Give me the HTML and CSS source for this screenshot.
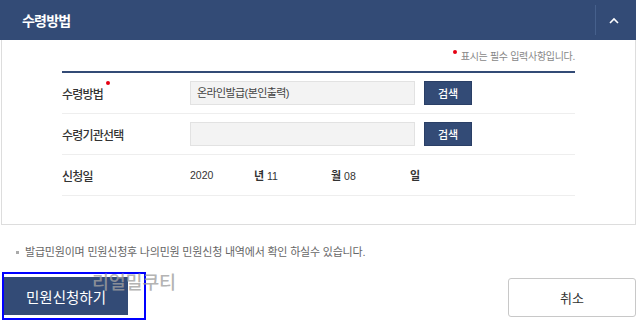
FILE: index.html
```html
<!DOCTYPE html>
<html lang="ko">
<head>
  <meta charset="UTF-8">
  <title>수령방법</title>
  <link rel="stylesheet" href="styles.css">
</head>
<body>

  <div class="wrap">
    <div class="panel-head">
      <h2>수령방법</h2>
      <div class="toggle">
        <svg width="10" height="7" viewBox="0 0 10 7"><path d="M1 6 L5 2 L9 6" fill="none" stroke="#fff" stroke-width="1.6"/></svg>
      </div>
    </div>

    <div class="panel-body">
      <p class="req-note"><span class="dot"></span>표시는 필수 입력사항입니다.</p>

      <div class="form-table">
        <div class="row">
          <div class="label">수령방법<span class="dot"></span></div>
          <div class="field">
            <div class="input">온라인발급(본인출력)</div>
            <button class="btn-search">검색</button>
          </div>
        </div>
        <div class="row">
          <div class="label">수령기관선택</div>
          <div class="field">
            <div class="input"></div>
            <button class="btn-search">검색</button>
          </div>
        </div>
        <div class="row">
          <div class="label">신청일</div>
          <div class="field date">
            <span class="d-year">2020</span>
            <span class="d-month"><b>년</b> 11</span>
            <span class="d-day"><b>월</b> 08</span>
            <span><b>일</b></span>
          </div>
        </div>
      </div>
    </div>

    <p class="info"><span class="bullet"></span>발급민원이며 민원신청후 나의민원 민원신청 내역에서 확인 하실수 있습니다.</p>

    <div class="actions">
      <div class="submit-wrap">
        <button class="btn-submit">민원신청하기</button>
      </div>
      <button class="btn-cancel">취소</button>
      <span class="watermark">리얼밀쿠티</span>
    </div>
  </div>

</body>
</html>
```

FILE: styles.css
```css
body {
  font-family: 'Liberation Sans', 'Noto Sans CJK KR', sans-serif;
  background-color: #fff;
  margin: 0;
  padding: 0;
  color: #333;
}

.wrap {
  width: 635px;
  margin-left: 1px;
  position: relative;
}

.panel-head {
  height: 40px;
  margin-left: -1px;
  background-color: #334b76;
  display: flex;
  align-items: center;
  justify-content: space-between;
  padding-left: 22px;
}

.panel-head h2 {
  margin: 0;
  color: #fff;
  font-size: 14px;
  font-weight: bold;
  letter-spacing: -0.8px;
}

.toggle {
  width: 40px;
  height: 30px;
  border-left: 1px solid #46608c;
  display: flex;
  align-items: center;
  justify-content: center;
}

.toggle svg {
  margin-left: -5px;
}

.panel-body {
  height: 184px;
  border: 1px solid #ddd;
  border-top: none;
  padding: 0 60px 0 60px;
}

.dot {
  display: inline-block;
  width: 4px;
  height: 4px;
  border-radius: 50%;
  background-color: #e60012;
  vertical-align: top;
}

.req-note {
  margin: 0;
  padding-top: 9px;
  height: 16px;
  line-height: 16px;
  text-align: right;
  font-size: 10px;
  letter-spacing: -0.3px;
  color: #888;
  margin-bottom: 6px;
}

.req-note .dot {
  margin: 1px 4px 0 0;
}

.form-table {
  border-top: 2px solid #334b76;
}

.row {
  height: 40px;
  border-bottom: 1px solid #eee;
  display: flex;
  align-items: center;
}

.label {
  width: 128px;
  font-size: 12px;
  font-weight: 500;
  letter-spacing: -0.8px;
  color: #333;
}

.label .dot {
  margin: -4px 0 0 3px;
}

.field {
  display: flex;
  align-items: center;
}

.input {
  width: 211px;
  height: 22px;
  line-height: 22px;
  padding: 0 6px;
  background-color: #f3f3f3;
  border: 1px solid #e2e2e2;
  font-size: 11px;
  letter-spacing: -0.6px;
  color: #444;
}

.btn-search {
  margin-left: 9px;
  width: 48px;
  height: 24px;
  padding: 0;
  border: 1px solid #2a3f66;
  background-color: #334b76;
  color: #fff;
  font-family: inherit;
  font-size: 11px;
  font-weight: 500;
}

.date {
  font-size: 10.5px;
  color: #333;
}

.date b {
  font-size: 11px;
}

.d-year {
  width: 64px;
}

.d-month {
  width: 77px;
}

.d-day {
  width: 79px;
}

.info {
  margin: 20px 0 0 15px;
  height: 14px;
  line-height: 14px;
  font-size: 11px;
  letter-spacing: -0.2px;
  color: #666;
}

.bullet {
  display: inline-block;
  width: 3px;
  height: 3px;
  background-color: #aaa;
  vertical-align: middle;
  margin: -2px 6px 0 0;
}

.actions {
  display: flex;
  justify-content: space-between;
  align-items: flex-start;
  margin-top: 13px;
}

.submit-wrap {
  width: 140px;
  height: 41px;
  border: 2px solid #0000ff;
  margin-left: 1px;
  padding-top: 3px;
}

.btn-submit {
  display: block;
  width: 124px;
  height: 38px;
  border: none;
  background-color: #334b76;
  color: #fff;
  font-family: inherit;
  font-size: 14.5px;
}

.btn-cancel {
  margin-top: 6px;
  width: 128px;
  height: 39px;
  border: 1px solid #c8c8c8;
  border-radius: 3px;
  background-color: #fff;
  color: #333;
  font-family: inherit;
  font-size: 13px;
}

.watermark {
  position: absolute;
  left: 91px;
  bottom: 26px;
  font-size: 18.5px;
  font-weight: 500;
  color: rgba(160, 160, 160, 0.8);
  letter-spacing: -0.3px;
  pointer-events: none;
}
```
